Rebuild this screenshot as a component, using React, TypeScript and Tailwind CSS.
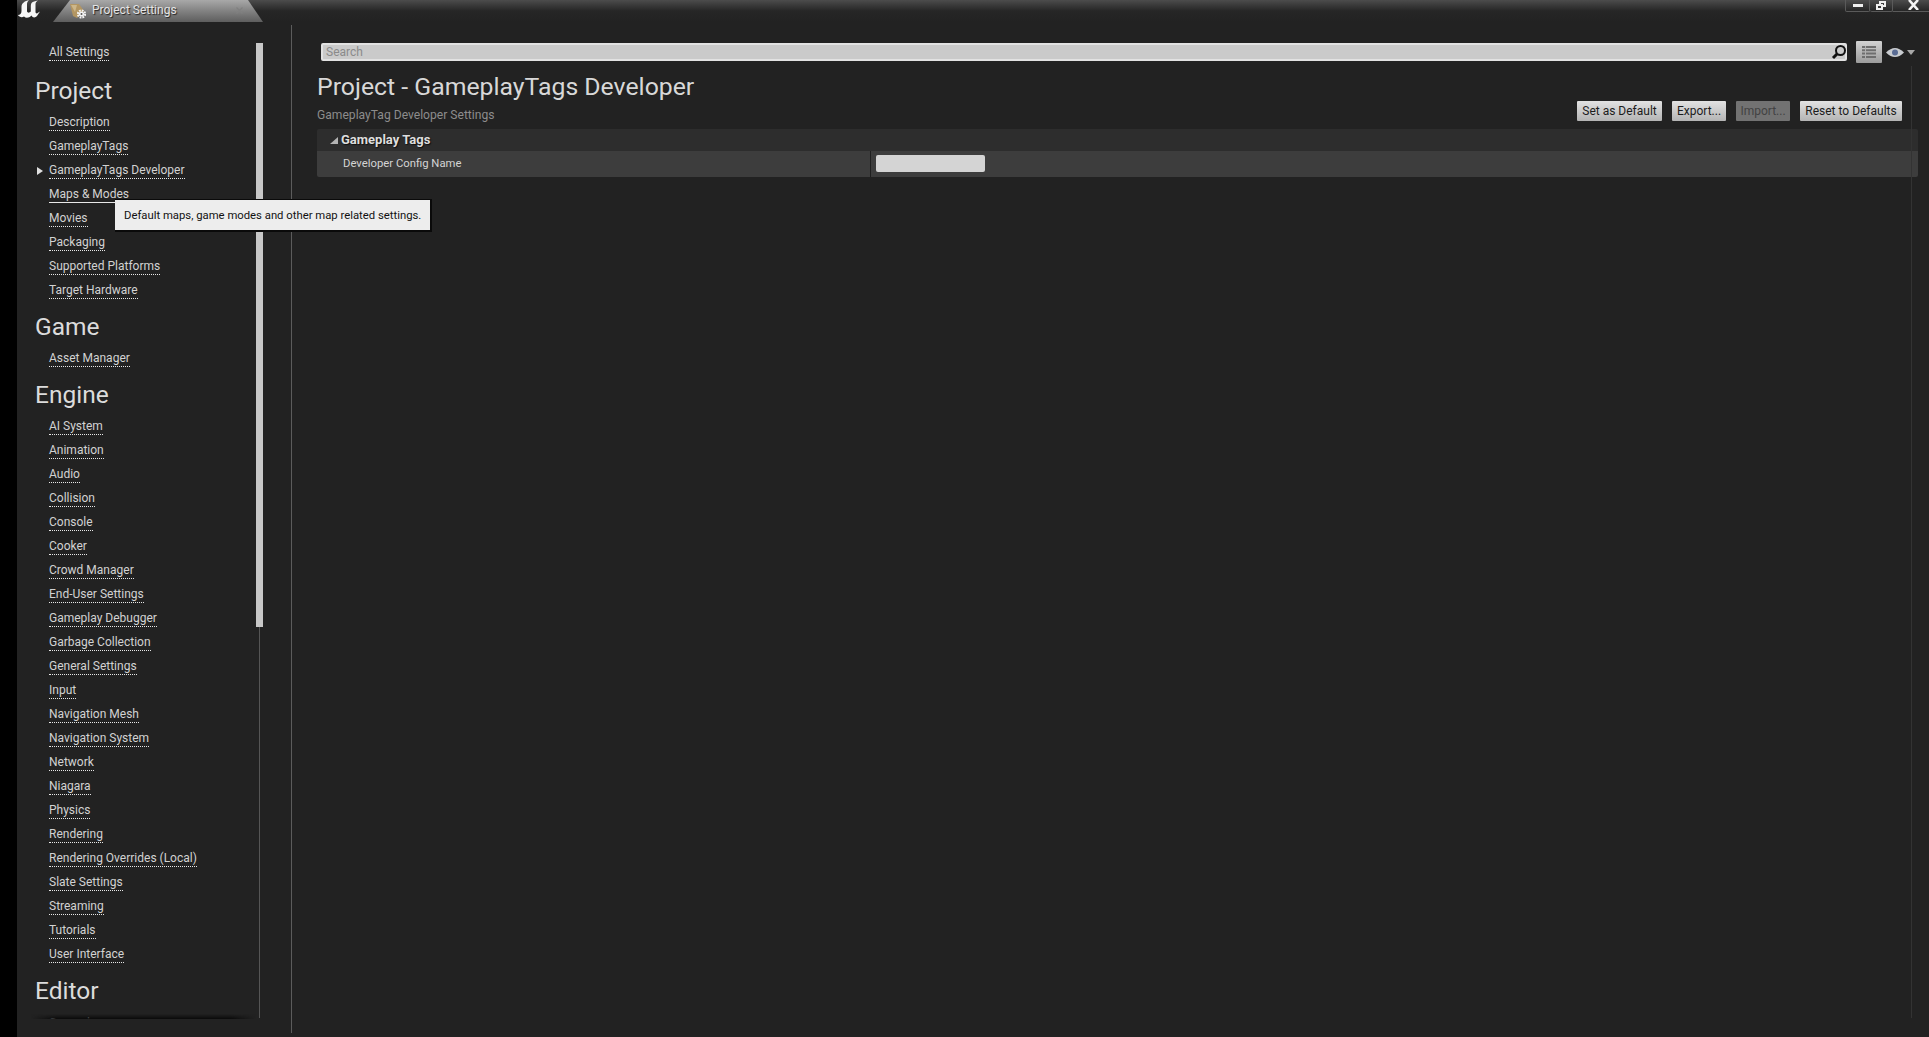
const project = ["Description", "GameplayTags", "GameplayTags Developer", "Maps & Modes", "Movies", "Packaging", "Supported Platforms", "Target Hardware"];
const engine = ["AI System", "Animation", "Audio", "Collision", "Console", "Cooker", "Crowd Manager", "End-User Settings", "Gameplay Debugger", "Garbage Collection", "General Settings", "Input", "Navigation Mesh", "Navigation System", "Network", "Niagara", "Physics", "Rendering", "Rendering Overrides (Local)", "Slate Settings", "Streaming", "Tutorials", "User Interface"];

function Item({ label, active, solid }: { label: string; active?: boolean; solid?: boolean }) {
  return (
    <div className="relative h-[24px] flex items-center pl-[32px]">
      {active && <span className="absolute left-[20px] top-[8px] w-0 h-0 border-y-[4px] border-y-transparent border-l-[6px] border-l-[#e0e0e0]" />}
      <span className={`text-[12px] leading-[15px] text-[#d2d2d2] border-b border-[#e8e8e8] ${solid ? "border-solid" : "border-dotted"}`}>{label}</span>
    </div>
  );
}

function Heading({ label }: { label: string }) {
  return <div className="h-[31px] flex items-center text-[24.5px] leading-[31px] text-[#dcdcdc] pl-[18px]">{label}</div>;
}

function Btn({ label, width, disabled }: { label: string; width: string; disabled?: boolean }) {
  return (
    <div className={`${width} h-[20px] flex items-center justify-center text-[12px] rounded-[1px] ${disabled ? "bg-[#727272] text-[#424242]" : "bg-gradient-to-b from-[#e2e2e2] to-[#b4b4b4] text-[#1c1c1c]"}`}>{label}</div>
  );
}

export default function App() {
  return (
    <div className="relative w-[1929px] h-[1037px] flex overflow-hidden bg-black font-['Roboto',sans-serif]">
      <div className="w-[17px] shrink-0 bg-black" />
      <div className="flex-1 flex flex-col min-w-0 bg-[#222222]">
        <div className="h-[22px] shrink-0 flex bg-gradient-to-b from-[#4c4c4c] via-[#262626] to-[#222222]">
          <svg width="22" height="18" viewBox="0 0 22 18" className="ml-[1px] shrink-0">
            <path d="M11 0 C7 1 3.5 3 3.5 7 L3.5 11 C3.5 13.5 2 15 0 15 C1 17 4 18 6 16.5 C8 18.5 11 18 13.5 15.5 C14.5 18 17.5 18 19 16 L22 11.5 L20 12.8 C19 14 17.5 13.5 17.5 12 L17.5 4 C17.5 2.5 18.5 1.5 20 0.5 C17 1 15 1.5 13.5 3 C13 4 12.8 5 12.8 6 L12.8 11.5 C11.5 13 9.5 13 9 11.5 L9 4 C9 2 10 1 11 0 Z" fill="#f6f6f6" />
          </svg>
          <div className="ml-[13px] w-[210px] h-[22px] flex items-center pl-[17px] pb-[2px] bg-gradient-to-b from-[#a8a8a8] to-[#5e5e5e] [clip-path:polygon(17px_0,195px_0,210px_100%,0_100%)]">
            <svg width="16" height="16" viewBox="0 0 16 16" className="shrink-0 translate-y-[1px]">
              <path d="M0 1 L9 1 L14 8 L7 15 L3 13 Z" fill="#b39662" />
              <path d="M1 2 L7 2 L5 9 Z" fill="#cdb78a" />
              <circle cx="11.5" cy="11" r="3.6" fill="none" stroke="#f4f4f4" strokeWidth="2" strokeDasharray="1.8 1" />
              <circle cx="11.5" cy="11" r="2.6" fill="#f4f4f4" />
              <circle cx="11.5" cy="11" r="1" fill="#555555" />
            </svg>
            <span className="ml-[6px] text-[12px] text-[#e4e4e4] [text-shadow:1px_1px_1px_#222]">Project Settings</span>
            <svg width="7" height="7" viewBox="0 0 7 7" className="ml-auto mr-[20px]"><path d="M0.5 0.5 L6.5 6.5 M6.5 0.5 L0.5 6.5" stroke="#808080" strokeWidth="1.3" /></svg>
          </div>
          <div className="ml-auto flex items-start h-[12px]">
            <div className="w-[25px] h-[12px] border border-t-0 border-[#5a5a5a] rounded-b-[2px] flex items-center justify-center"><span className="w-[10px] h-[3px] bg-[#eeeeee]" /></div>
            <div className="w-[23px] h-[12px] border border-t-0 border-l-0 border-[#5a5a5a] rounded-b-[2px] flex items-center justify-center">
              <svg width="10" height="9" viewBox="0 0 10 9"><path d="M3 0 H10 V6 H7 V9 H0 V3 H3 Z M2 5 V7 H5 V5 Z M5 2 V3 H7 V4 H8 V2 Z" fill="#eeeeee" fillRule="evenodd" /></svg>
            </div>
            <div className="w-[36px] h-[12px] border-b border-[#5a5a5a] flex items-start justify-center pl-[5px]">
              <svg width="11" height="10" viewBox="0 0 11 10"><path d="M1 0 L10 10 M10 0 L1 10" stroke="#f4f4f4" strokeWidth="2.6" /></svg>
            </div>
          </div>
        </div>

        <div className="flex-1 flex min-h-0">
          <div className="relative w-[275px] shrink-0 flex border-r border-[#5c5c5c] mt-[3px] mb-[4px]">
            <div className="relative w-[239px] shrink-0 h-[994px]">
              <div className="h-full overflow-hidden pt-[16px]">
                <Item label="All Settings" />
                <div className="h-[10px]" />
                <Heading label="Project" />
                <div className="h-[5px]" />
                {project.map((l) => (
                  <Item key={l} label={l} active={l === "GameplayTags Developer"} solid={l === "Maps & Modes"} />
                ))}
                <div className="h-[8px]" />
                <Heading label="Game" />
                <div className="h-[5px]" />
                <Item label="Asset Manager" />
                <div className="h-[8px]" />
                <Heading label="Engine" />
                <div className="h-[5px]" />
                {engine.map((l) => (
                  <Item key={l} label={l} />
                ))}
                <div className="h-[8px]" />
                <Heading label="Editor" />
                <div className="h-[6px]" />
                <Item label="General" />
              </div>
              <div className="absolute left-[14px] right-[0px] bottom-0 h-[5px] bg-gradient-to-b from-transparent to-[#0a0a0a] [mask-image:linear-gradient(to_right,transparent,black_25px,black_calc(100%-25px),transparent)]" />
            </div>
            <div className="w-[7px] h-[993px] shrink-0 pt-[18px] flex">
              <div className="flex-1 bg-[linear-gradient(to_right,transparent_3px,#555555_3px,#555555_4px,transparent_4px)]">
                <div className="w-[7px] h-[584px] bg-[#c8c8c8]" />
              </div>
            </div>
          </div>

          <div className="flex-1 min-w-0 pl-[25px] pr-[11px] pt-[19px]">
            <div className="flex items-center h-[22px] pl-[4px] pr-[3px]">
              <div className="flex-1 h-[18px] flex items-center rounded-[2px] bg-[#cacaca] border-[2px] border-[#e2e2e2] pl-[3px] text-[12px] text-[#8a8a8a]">
                <span>Search</span>
                <svg width="16" height="16" viewBox="0 0 16 16" className="ml-auto -mr-[2px]"><circle cx="9.5" cy="6.5" r="4.5" fill="none" stroke="#111111" strokeWidth="2" /><path d="M6 10 L2 14" stroke="#111111" strokeWidth="3" /></svg>
              </div>
              <div className="ml-[9px] w-[26px] h-[22px] rounded-[1px] bg-gradient-to-b from-[#d2d2d2] to-[#9c9c9c] flex items-center justify-center">
                <svg width="14" height="12" viewBox="0 0 14 12" fill="#6e6e6e"><path d="M0 0H14V2H0ZM0 3.3H14V5.3H0ZM0 6.6H14V8.6H0ZM0 10H14V12H0Z" /><path d="M3 0H4V12H3Z" fill="#b0b0b0" /></svg>
              </div>
              <svg width="18" height="11" viewBox="0 0 18 11" className="ml-[4px]"><path d="M0 5.5 Q9 -3.5 18 5.5 Q9 14.5 0 5.5Z" fill="#c9ccd0" /><circle cx="9" cy="5.5" r="3" fill="#5a6c94" /></svg>
              <span className="ml-[3px] w-0 h-0 border-x-[4px] border-x-transparent border-t-[5px] border-t-[#a8a8a8]" />
            </div>
            <div className="mt-[7px] flex items-end justify-between">
              <div>
                <div className="h-[33px] flex items-center text-[24.8px] text-[#d8d8d8]">Project - GameplayTags Developer</div>
                <div className="h-[24px] flex items-center text-[12.1px] text-[#8c8c8c]">GameplayTag Developer Settings</div>
              </div>
              <div className="flex items-center gap-[10px] pr-[16px] pb-[6px]">
                <Btn label="Set as Default" width="w-[85px]" />
                <Btn label="Export..." width="w-[54px]" />
                <Btn label="Import..." width="w-[54px]" disabled />
                <Btn label="Reset to Defaults" width="w-[102px]" />
              </div>
            </div>
            <div className="mt-[2px] rounded-[2px] overflow-hidden">
              <div className="h-[22px] flex items-center bg-[#2d2d2d] pl-[13px]">
                <span className="w-0 h-0 border-b-[7px] border-b-[#b4b4b4] border-l-[8px] border-l-transparent" />
                <span className="ml-[3px] text-[13px] font-bold text-[#dedede] [text-shadow:1px_1px_1px_#111]">Gameplay Tags</span>
              </div>
              <div className="h-[26px] flex items-center bg-[#3d3d3d]">
                <div className="w-[554px] h-full flex items-center pl-[26px] border-r border-[#1f1f1f] text-[11.3px] text-[#d4d4d4]">Developer Config Name</div>
                <div className="ml-[5px] w-[109px] h-[17px] rounded-[2px] bg-[#d4d4d4] -translate-y-px" />
              </div>
            </div>
          </div>
        </div>
      </div>

      <div className="absolute left-[1911px] top-[66px] w-px h-[952px] bg-[#333333]" />

      <div className="absolute left-[115px] top-[199px] w-[317px] h-[33px] bg-[#ededed] border-t border-r-2 border-b-2 border-[#0a0a0a] flex items-center pl-[9px] pt-[2px] text-[11.3px] whitespace-nowrap text-[#111111]">
        Default maps, game modes and other map related settings.
      </div>
    </div>
  );
}
